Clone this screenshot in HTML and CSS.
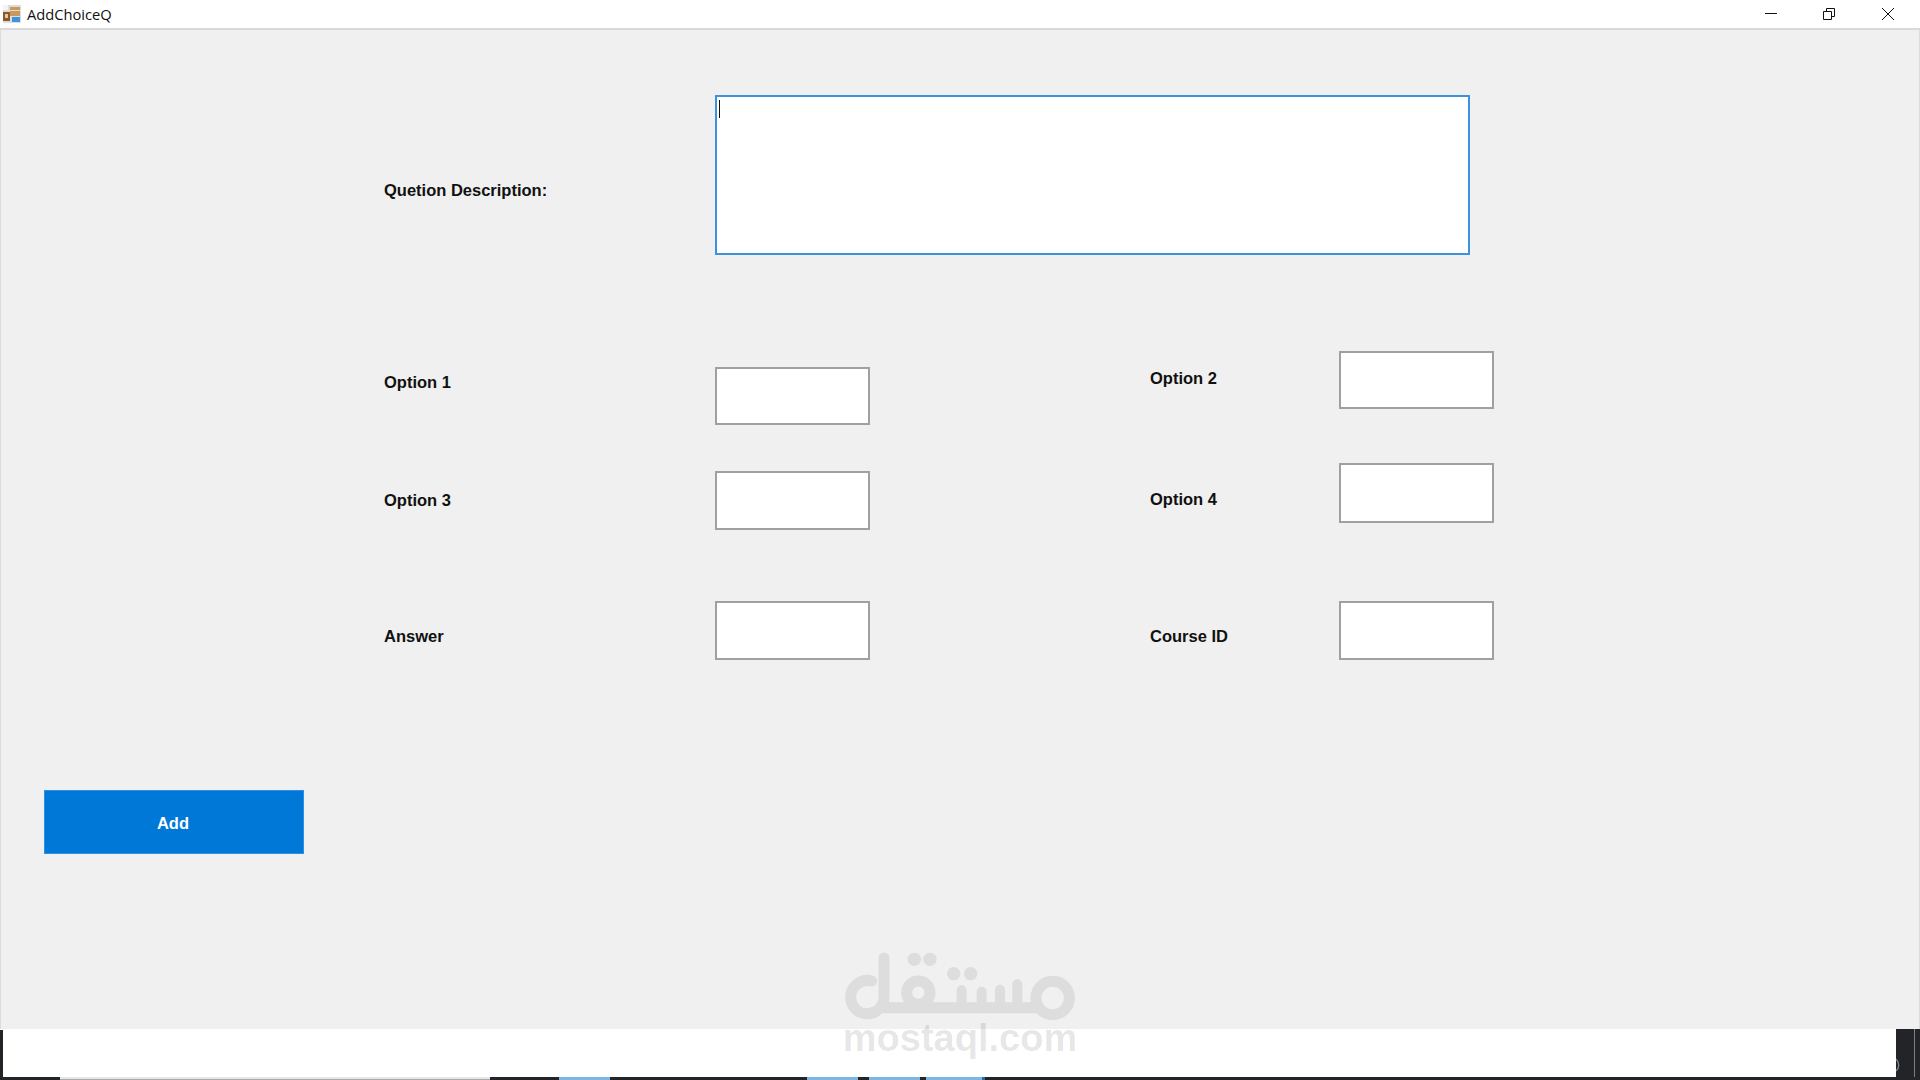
FILE: index.html
```html
<!DOCTYPE html>
<html lang="en">
<head>
<meta charset="utf-8">
<title>AddChoiceQ</title>
<link rel="stylesheet" href="styles.css">
</head>
<body>
<div class="window">
  <header class="titlebar">
    <svg class="app-icon" width="18" height="18" viewBox="0 0 18 18" aria-hidden="true">
      <rect width="18" height="18" fill="#dcdcdc"/>
      <rect x="0" y="0" width="5" height="5" fill="#f4f4f4"/>
      <rect x="0" y="7" width="7" height="9" fill="#8a5a2e"/>
      <rect x="2" y="9" width="3" height="4" fill="#e6c79a"/>
      <rect x="7" y="2" width="10" height="9" fill="#c8995f"/>
      <rect x="7" y="5" width="10" height="1" fill="#eed6ae"/>
      <rect x="9" y="12" width="8" height="5" fill="#3f93dd"/>
    </svg>
    <span class="app-title">AddChoiceQ</span>
    <div class="controls">
      <svg class="ctl" width="12" height="12" viewBox="0 0 12 12" aria-hidden="true"><path d="M0 5.5H12" stroke="#111" fill="none"/></svg>
      <svg class="ctl ctl-restore" width="12" height="12" viewBox="0 0 12 12" aria-hidden="true"><path d="M.5 3.5H8.5V11.5H.5ZM3.5 3.5V.5H11.5V8.5H8.5" stroke="#111" fill="none"/></svg>
      <svg class="ctl" width="12" height="12" viewBox="0 0 12 12" aria-hidden="true"><path d="M0 0L12 12M12 0L0 12" stroke="#111" fill="none"/></svg>
    </div>
  </header>

  <main class="client">
    <section class="question">
      <label class="label label-question">Quetion Description:</label>
      <div class="editor"><span class="caret"></span></div>
    </section>

    <section class="options">
      <div class="col col-left">
        <div class="row"><label class="label pad-o1">Option 1</label><input class="field h58"></div>
        <div class="row row-o3"><label class="label pad-o3">Option 3</label><input class="field h59"></div>
        <div class="row row-answer"><label class="label pad-answer">Answer</label><input class="field h59"></div>
      </div>
      <div class="col col-right">
        <div class="row"><label class="label pad-o2">Option 2</label><input class="field h58"></div>
        <div class="row row-o4"><label class="label pad-o4">Option 4</label><input class="field h60"></div>
        <div class="row row-course"><label class="label pad-answer">Course ID</label><input class="field h59"></div>
      </div>
    </section>

    <button class="add" type="button">Add</button>
  </main>

  <footer class="behind">
    <div class="behind-main">
      <div class="edge"></div>
      <div class="blank"></div>
      <div class="tray">
        <svg class="tray-arc" width="4" height="14" viewBox="0 0 4 14" aria-hidden="true"><path d="M0 1A8 8 0 0 1 0 13" stroke="#7d8590" stroke-width="1.4" fill="none"/></svg>
        <div class="tray-line"></div>
      </div>
    </div>
    <div class="strip">
      <i class="seg dark w60"></i><i class="seg light w430"></i><i class="seg dark w69"></i><i class="seg blue w51"></i><i class="seg dark w197"></i><i class="seg blue w51"></i><i class="seg dark w11"></i><i class="seg blue w51"></i><i class="seg dark w6"></i><i class="seg blue w56"></i><i class="seg mid w3"></i><i class="seg dark grow"></i>
    </div>
  </footer>

  <div class="watermark">
    <svg class="wm-logo" width="230" height="70" viewBox="195 65 690 210" aria-label="مستقل" role="img">
      <g fill="none" stroke="#000" stroke-width="33" stroke-linecap="round">
        <path d="M275 152A50 50 0 1 0 312 200V83"/>
        <path d="M312 232H770"/>
        <circle cx="415" cy="187" r="35"/>
        <circle cx="818" cy="203" r="50"/>
      </g>
      <g fill="none" stroke="#000" stroke-width="30" stroke-linecap="round">
        <path d="M545 232V180M605 232V184M660 232V178M712 232V162"/>
      </g>
      <g>
        <circle cx="403" cy="87" r="20"/><circle cx="450" cy="87" r="20"/>
        <circle cx="521" cy="130" r="20"/><circle cx="572" cy="130" r="20"/>
      </g>
    </svg>
    <span class="wm-text">mostaql.com</span>
  </div>
</div>
</body>
</html>
```
FILE: styles.css
```css
* { box-sizing: border-box; }
html, body { margin: 0; padding: 0; }
body { width: 1920px; height: 1080px; overflow: hidden; background: #f0f0f0; font-family: "Liberation Sans", Arial, sans-serif; }

.window { position: relative; width: 1920px; height: 1080px; display: flex; flex-direction: column; }

.titlebar { height: 30px; flex: none; display: flex; align-items: center; background: #fff; border-bottom: 2px solid #d9d9d9; padding-left: 3px; padding-bottom: 1px; }
.app-icon { flex: none; margin-right: 6px; }
.app-title { font-family: "Open Sans", sans-serif; font-size: 14.7px; color: #111; }
.controls { margin-left: auto; display: flex; gap: 46px; padding-right: 26px; }
.ctl { display: block; }
.ctl-restore { margin-right: 1px; }

.client { flex: 1; border-left: 1px solid #dcdcdc; border-right: 1px solid #dcdcdc; background: #f0f0f0; }

.label { display: block; font-size: 16.5px; line-height: 20px; font-weight: 700; color: #111; }

.question { display: flex; margin: 65px 0 0 383px; }
.label-question { width: 331px; padding-top: 85px; }
.editor { position: relative; width: 755px; height: 160px; background: #fff; border: 2px solid #3d92e0; }
.caret { position: absolute; left: 2px; top: 3px; width: 1px; height: 18px; background: #111; }

.options { display: flex; margin: 96px 0 0 383px; }
.col { display: flex; flex-direction: column; }
.col-left { width: 766px; padding-top: 16px; }
.col-right { width: 344px; }
.row { display: flex; justify-content: space-between; }
.row-o3 { margin-top: 46px; }
.row-answer { margin-top: 71px; }
.row-o4 { margin-top: 54px; }
.row-course { margin-top: 78px; }

.pad-o1 { padding-top: 5px; }
.pad-o3 { padding-top: 19px; }
.pad-answer { padding-top: 25px; }
.pad-o2 { padding-top: 17px; }
.pad-o4 { padding-top: 26px; }

.col-left .field { margin-left: auto; margin-right: 280px; }
.field { display: block; width: 155px; background: #fff; border: 2px solid #a0a0a0; padding: 0; outline: 0; border-radius: 0; }
.h58 { height: 58px; }
.h59 { height: 59px; }
.h60 { height: 60px; }

.add { display: block; width: 260px; height: 64px; margin: 130px 0 0 43px; background: #0078d7; border: 1px solid #2b8fe3; color: #fff; font: 700 16.5px/20px "Liberation Sans", Arial, sans-serif; padding: 2px 2px 0 0; }

.behind { flex: none; height: 51px; display: flex; flex-direction: column; background: #fff; }
.behind-main { flex: 1; display: flex; }
.edge { width: 3px; margin-top: 1px; background: #222428; }
.blank { flex: 1; background: #fff; }
.tray { width: 24px; display: flex; align-items: flex-start; background: #222428; }
.tray-arc { margin-top: 29px; flex: none; }
.tray-line { width: 1px; height: 48px; margin-left: 14px; background: #7b7d80; }

.strip { height: 3px; display: flex; flex: none; }
.seg { display: block; flex: none; height: 3px; }
.dark { background: #222428; }
.light { background: #e6e6e6; border-bottom: 1px solid #aaa; }
.blue { background: #7ab6e6; }
.mid { background: #2a6aa5; }
.w3 { width: 3px; } .w6 { width: 6px; } .w11 { width: 11px; } .w51 { width: 51px; } .w56 { width: 56px; }
.w60 { width: 60px; } .w69 { width: 69px; } .w197 { width: 197px; } .w430 { width: 430px; }
.grow { flex: 1; }

.watermark { position: absolute; left: 845px; top: 952px; width: 230px; display: flex; flex-direction: column; align-items: center; pointer-events: none; }
.wm-logo { display: block; opacity: .075; }
.wm-text { margin-top: -4px; font-size: 38px; line-height: 40px; font-weight: 700; color: rgba(0,0,0,.1); white-space: nowrap; }
```
